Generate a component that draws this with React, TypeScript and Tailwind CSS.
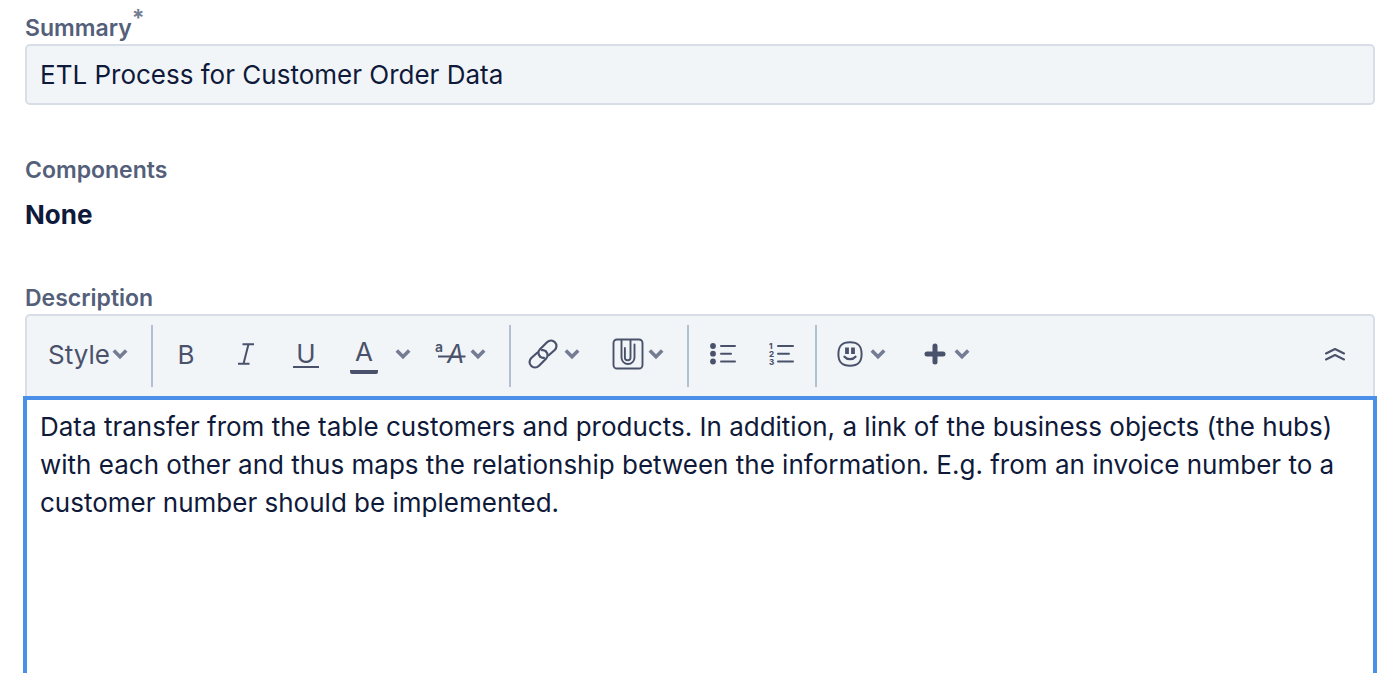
import type { ReactNode } from "react";

const description =
  "Data transfer from the table customers and products. In addition, a link of the business objects (the hubs) with each other and thus maps the relationship between the information. E.g. from an invoice number to a customer number should be implemented.";

function Chevron() {
  return (
    <svg width="16" height="12" viewBox="0 0 16 12" fill="none" className="shrink-0 text-[#747d93]" aria-hidden="true">
      <path d="M1.800 2.500 8 8.700l6.200-6.200" stroke="currentColor" strokeWidth="3.600" />
    </svg>
  );
}

function CaseIcon() {
  return (
    <svg width="32" height="32" viewBox="0 0 32 32" className="shrink-0 overflow-visible" fill="currentColor" aria-hidden="true">
      <text x="1" y="14" fontSize="14" fontWeight="600">a</text>
      <text x="13" y="25" fontSize="25" fontWeight="400" fontStyle="italic">A</text>
      <path d="M4 18.500h27.500" stroke="currentColor" strokeWidth="2" />
    </svg>
  );
}

function LinkIcon() {
  return (
    <svg width="30" height="30" viewBox="0 0 30 30" className="shrink-0" fill="none" stroke="currentColor" strokeWidth="2.200" strokeLinecap="round" strokeLinejoin="round" aria-hidden="true">
      <path d="M12 17.500C10 15.500 9.800 12.300 12 10.200L19 3.300C21.300 1.100 24.700 1 26.900 3.200s2 5.600-.2 7.800L20.800 16.300" />
      <path d="M18 12.500c2 2 2.200 5.200 0 7.300L11 26.700c-2.300 2.200-5.700 2.300-7.900 .1s-2-5.600 .2-7.800L9.200 13.700" />
      <path d="M12 17.500c1.200 1.200 2.600 1.500 4 1.300M18 12.500c-1.200-1.200-2.600-1.500-4-1.300" />
    </svg>
  );
}

function AttachmentIcon() {
  return (
    <svg width="32" height="32" viewBox="0 0 32 32" className="shrink-0" fill="none" stroke="currentColor" strokeWidth="1.900" aria-hidden="true">
      <rect x="1.500" y="1.500" width="29" height="29" rx="3.500" />
      <path d="M9.500 2v17.500a6.500 6.500 0 0 0 13 0V6.500M18.500 2v17.500a2.800 2.800 0 0 1-5.600 0V10" strokeLinecap="round" />
    </svg>
  );
}

function BulletListIcon() {
  return (
    <svg width="26" height="22" viewBox="0 0 26 22" className="shrink-0" fill="currentColor" aria-hidden="true">
      <circle cx="3" cy="3" r="2.900" />
      <circle cx="3" cy="10.700" r="2.900" />
      <circle cx="3" cy="18.500" r="2.900" />
      <path d="M11 3h14M11 10.700h10M11 18.500h14" stroke="currentColor" strokeWidth="2" strokeLinecap="round" />
    </svg>
  );
}

function NumberedListIcon() {
  return (
    <svg width="26" height="24" viewBox="0 0 26 24" className="shrink-0 overflow-visible" fill="currentColor" aria-hidden="true">
      <text x="0" y="7" fontSize="8" fontWeight="800">1</text>
      <text x="0" y="15" fontSize="8" fontWeight="800">2</text>
      <text x="0" y="23" fontSize="8" fontWeight="800">3</text>
      <path d="M9 4h15M9 11.700h11M9 19.500h15" stroke="currentColor" strokeWidth="2" strokeLinecap="round" />
    </svg>
  );
}

function SmileIcon() {
  return (
    <svg width="26" height="26" viewBox="0 0 26 26" className="shrink-0" fill="none" stroke="currentColor" strokeWidth="2" aria-hidden="true">
      <path d="M13 1.200c8.300 0 11.600 3.500 11.600 11.800S21.300 24.800 13 24.800 1.400 21.300 1.400 13 4.700 1.200 13 1.200Z" />
      <path d="M10 6.500v6.500M16 6.500v6.500" strokeWidth="3.800" />
      <path d="M7.500 15.700c2.600 3.200 8.400 3.200 11 0" strokeWidth="2.200" strokeLinecap="round" />
    </svg>
  );
}

function PlusIcon() {
  return (
    <svg width="22" height="22" viewBox="0 0 22 22" className="shrink-0" aria-hidden="true">
      <path d="M11 3v16M3 11h16" stroke="currentColor" strokeWidth="5" strokeLinecap="round" />
    </svg>
  );
}

function ToolButton({ label, className, children }: { label: string; className: string; children: ReactNode }) {
  return (
    <button type="button" aria-label={label} className={`flex h-full items-center pb-1 ${className}`}>
      {children}
    </button>
  );
}

function Group({ className, children }: { className: string; children: ReactNode }) {
  return <div className={`flex h-[62px] items-center ${className}`}>{children}</div>;
}

export default function App() {
  return (
    <main className="bg-white px-[25px] pt-3 font-['Inter',sans-serif] text-[26px] text-[#0f1a3a]">
      <form>
        <label htmlFor="summary" className="flex h-8 items-center text-[23px] font-semibold text-[#54607a]">
          Summary
          <span className="mb-5 font-bold text-[#747d93]">*</span>
        </label>
        <input
          id="summary"
          defaultValue="ETL Process for Customer Order Data"
          className="block h-[61px] w-full rounded-[5px] border-2 border-[#d8dee7] bg-[#f2f5f8] px-[13px] outline-none"
        />

        <section className="mt-[49px]">
          <h2 className="text-[23px] leading-8 font-semibold text-[#54607a]">Components</h2>
          <p className="mt-[9px] leading-10 font-bold">None</p>
        </section>

        <label htmlFor="description" className="mt-[47px] block text-[23px] leading-8 font-semibold text-[#54607a]">
          Description
        </label>
        <div
          role="toolbar"
          aria-label="Formatting"
          className="flex h-[82px] items-center rounded-t-[5px] border-2 border-b-0 border-[#d8dee7] bg-[#f2f5f8] text-[#4a526b]"
        >
          <Group className="w-[126px] border-r-2 border-[#b3bfd2]">
            <ToolButton label="Style" className="gap-[2px] pl-[21px]">
              Style
              <Chevron />
            </ToolButton>
          </Group>
          <Group className="w-[358px] border-r-2 border-[#b3bfd2] pl-[3px]">
            <ToolButton label="Bold" className="w-[60px] justify-center">B</ToolButton>
            <ToolButton label="Italic" className="w-[60px] justify-center">
              <svg width="18" height="22" viewBox="0 0 18 22" className="shrink-0" fill="none" stroke="currentColor" strokeWidth="2" aria-hidden="true">
                <path d="M5.500 1.200H17M1 20.800h11.500M11.500 1.200l-5 19.600" />
              </svg>
            </ToolButton>
            <ToolButton label="Underline" className="w-[60px] justify-center">
              <span className="flex h-7 w-[26px] items-center justify-center border-b-2 border-current">U</span>
            </ToolButton>
            <ToolButton label="Text colour" className="w-14 justify-center">
              <span className="mt-1 flex h-9 w-7 items-start justify-center rounded-[2px] border-b-4 border-current leading-7">A</span>
            </ToolButton>
            <ToolButton label="More colours" className="w-[22px] justify-center"><Chevron /></ToolButton>
            <ToolButton label="More formatting" className="gap-1 pl-5"><CaseIcon /><Chevron /></ToolButton>
          </Group>
          <Group className="w-[178px] border-r-2 border-[#b3bfd2] pl-[17px]">
            <ToolButton label="Link" className="gap-[6px]"><LinkIcon /><Chevron /></ToolButton>
            <ToolButton label="Attachment" className="gap-1 pl-8"><AttachmentIcon /><Chevron /></ToolButton>
          </Group>
          <Group className="w-32 border-r-2 border-[#b3bfd2] pl-[21px]">
            <ToolButton label="Bullet list" className="w-[59px]"><BulletListIcon /></ToolButton>
            <ToolButton label="Numbered list" className="w-8"><NumberedListIcon /></ToolButton>
          </Group>
          <Group className="pl-5">
            <ToolButton label="Emoji" className="gap-[7px]"><SmileIcon /><Chevron /></ToolButton>
            <ToolButton label="Insert" className="gap-2 pl-[38px]"><PlusIcon /><Chevron /></ToolButton>
          </Group>
          <ToolButton label="Collapse toolbar" className="mr-7 ml-auto">
            <svg width="20" height="14" viewBox="0 0 20 14" className="shrink-0" fill="none" stroke="currentColor" strokeWidth="2" aria-hidden="true">
              <path d="M1 6.500 10 2l9 4.500M1 12.500 10 8l9 4.500" strokeLinecap="round" strokeLinejoin="round" />
            </svg>
          </ToolButton>
        </div>
        <div className="-mx-[2px]">
          <textarea
            id="description"
            defaultValue={description}
            className="block h-[277px] w-full resize-none border-4 border-b-0 border-[#4a90e8] bg-white px-[13px] pt-2 leading-[38px] outline-none"
          />
        </div>
      </form>
    </main>
  );
}
